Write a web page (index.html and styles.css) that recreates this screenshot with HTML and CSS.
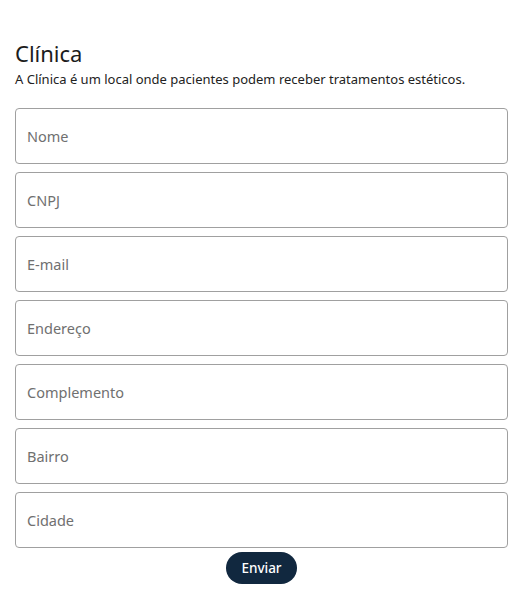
FILE: index.html
```html
<!DOCTYPE html>
<html lang="pt-BR">
<head>
<meta charset="utf-8">
<title>Clínica</title>
<link rel="stylesheet" href="styles.css">
</head>
<body>
<main class="page">
  <header class="head">
    <h1 class="title">Clínica</h1>
    <p class="subtitle">A Clínica é um local onde pacientes podem receber tratamentos estéticos.</p>
  </header>
  <form class="form">
    <input class="field" type="text" placeholder="Nome">
    <input class="field" type="text" placeholder="CNPJ">
    <input class="field" type="text" placeholder="E-mail">
    <input class="field" type="text" placeholder="Endereço">
    <input class="field" type="text" placeholder="Complemento">
    <input class="field" type="text" placeholder="Bairro">
    <input class="field" type="text" placeholder="Cidade">
    <button class="submit" type="button">Enviar</button>
  </form>
</main>
</body>
</html>
```
FILE: styles.css
```css
* { box-sizing: border-box; }
html, body { margin: 0; padding: 0; background: #fff; }
body {
  font-family: "Noto Sans", "Open Sans", sans-serif;
  color: #1a1a1a;
}
.page {
  padding: 39px 18px 0 15px;
}
.head { margin-bottom: 20px; }
.title {
  margin: 0;
  font-size: 22px;
  font-weight: 400;
  line-height: 28px;
  color: #1c1c1c;
}
.subtitle {
  margin: 3px 0 0;
  font-size: 13px;
  line-height: 18px;
  color: #222;
}
.form {
  display: flex;
  flex-direction: column;
  gap: 8px;
}
.field {
  display: block;
  width: 100%;
  height: 56px;
  padding: 0 11px;
  border: 1px solid #a0a0a0;
  border-radius: 4px;
  font-family: inherit;
  font-size: 14.5px;
  color: #333;
  background: #fff;
  outline: none;
}
.field::placeholder { color: #707070; }
.submit {
  align-self: center;
  margin-top: -4px;
  height: 32px;
  padding: 0 15px;
  border: none;
  border-radius: 16px;
  background: #11283f;
  color: #fff;
  font-family: inherit;
  font-size: 13.5px;
  font-weight: 500;
  cursor: pointer;
}
```
